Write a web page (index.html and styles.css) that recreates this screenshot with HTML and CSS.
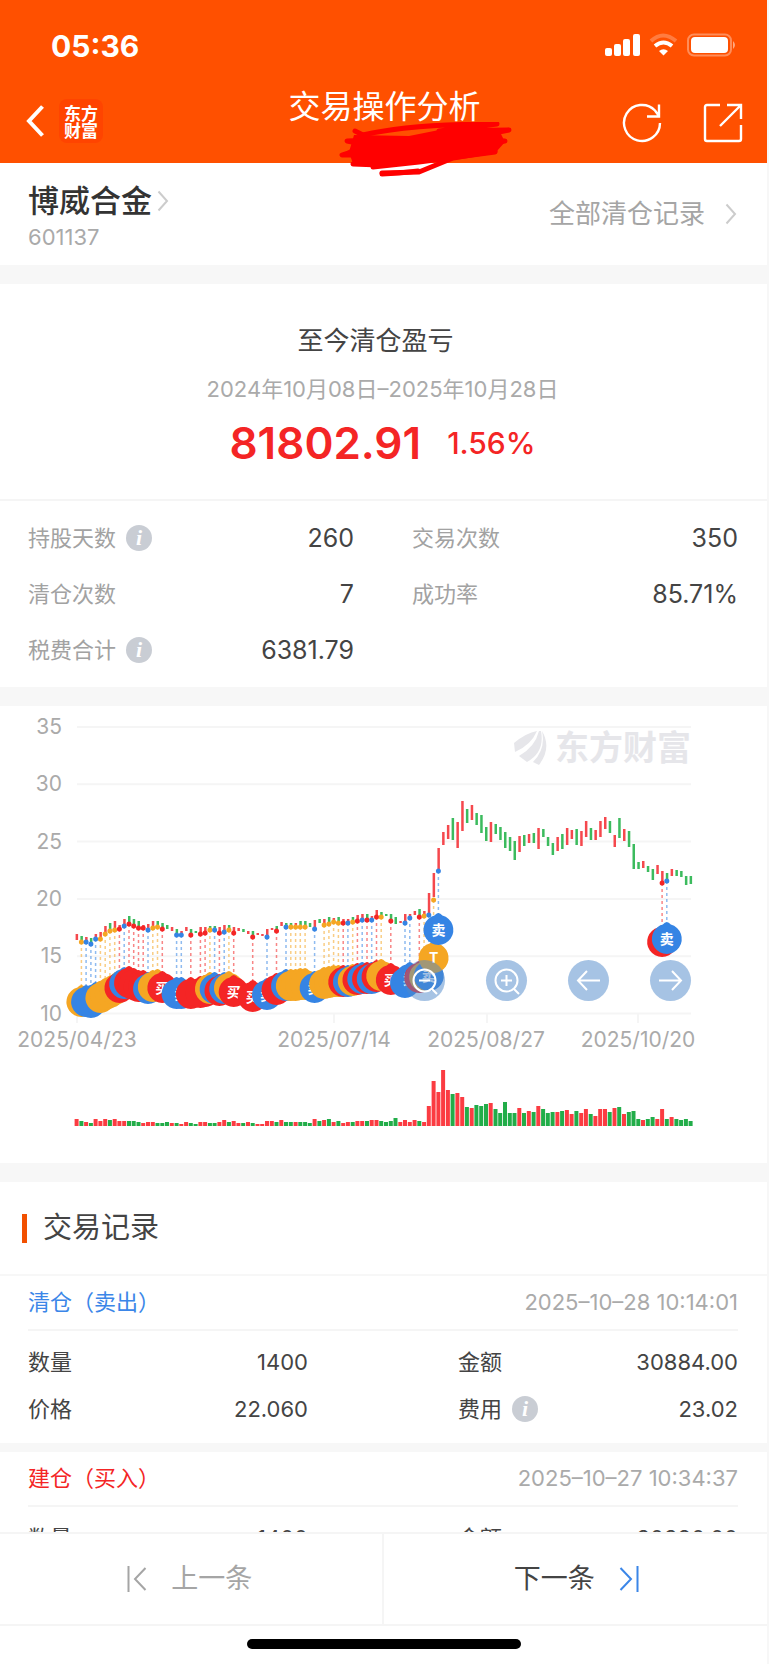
FILE: index.html
```html
<!DOCTYPE html>
<html lang="zh-CN">
<head>
    <meta charset="UTF-8">
    <meta name="viewport" content="width=device-width, initial-scale=1.0">
    <title>交易操作分析</title>
    <link rel="stylesheet" href="styles.css">
</head>
<body>
<div class="app">
    <!-- Header -->
    <header class="header">
        <div class="statusbar">
            <span class="time">05:36</span>
            <svg class="status-icons" width="134" height="26" viewBox="0 0 134 26" fill="#fff">
                <rect x="0" y="15" width="7" height="8" rx="2"/>
                <rect x="9" y="11" width="7" height="12" rx="2"/>
                <rect x="18" y="6" width="7" height="17" rx="2"/>
                <rect x="28" y="1" width="7" height="22" rx="2"/>
                <path d="M46 8Q58-3 71 8" fill="none" stroke="#fff" stroke-width="4" opacity=".25"/>
                <path d="M50 13Q58.500 6 67 13" fill="none" stroke="#fff" stroke-width="4"/>
                <path d="M54 18Q58.500 14.500 63 18L58.500 22.500Z"/>
                <rect x="83" y="1.500" width="43" height="21" rx="6" fill="none" stroke="#fff" stroke-width="2" opacity=".35"/>
                <rect x="86" y="4" width="37" height="16" rx="4"/>
                <path d="M128 8q4 4 0 8z" opacity=".5"/>
            </svg>
        </div>
        <div class="navbar">
            <div class="nav-side">
                <button class="icon-btn" aria-label="返回">
                    <svg width="18" height="32" viewBox="0 0 18 32" fill="none" stroke="#fff" stroke-width="4"><path d="M16.500 1.500L3 16l13.500 14.500"/></svg>
                </button>
                <span class="brand">东方<br>财富</span>
            </div>
            <h1>交易操作分析</h1>
            <div class="nav-side nav-right">
                <button class="icon-btn" aria-label="刷新">
                    <svg width="40" height="40" viewBox="0 0 40 40" fill="none" stroke="#fff" stroke-width="2.400"><path d="M38 20A18 18 0 1 1 33 7.500L37 13M37 1.500V13.500H25"/></svg>
                </button>
                <button class="icon-btn" aria-label="分享">
                    <svg width="40" height="40" viewBox="0 0 40 40" fill="none" stroke="#fff" stroke-width="2.400"><path d="M17 2H4Q2 2 2 4V36Q2 38 4 38H36Q38 38 38 36V22M24 2H38V16M38 2L17 23"/></svg>
                </button>
            </div>
        </div>
        <svg class="scribble" width="174" height="56" viewBox="0 0 174 56" fill="none" stroke="#f00" stroke-width="5" stroke-linecap="round" stroke-linejoin="round">
            <path d="M15 13L70 14L110 6L160 8L166 20L158 29L120 34L70 43L14 42L10 30Z" fill="#f00" stroke="none"/>
            <path d="M16 9L34 18L8 19L28 23L9 31L3 33H60L14 42L40 43L90 35"/>
            <path d="M24 13Q70 2 158 2L100 9L170 8L120 18L166 19L110 27L156 30L80 40L34 45"/>
            <path d="M43 51L80 50L114 36L156 29"/>
            <path d="M43 52L60 51L79 49"/>
        </svg>
    </header>

    <main class="content">
        <section class="stock">
            <div class="stock-name">
                <h2><a href="#">博威合金<svg width="12" height="22" viewBox="0 0 12 22"><path d="M1.500 1.500L10 11l-8.500 9.500"/></svg></a></h2>
                <p>601137</p>
            </div>
            <a class="all-records" href="#">全部清仓记录<svg width="12" height="22" viewBox="0 0 12 22"><path d="M1.500 1.500L10 11l-8.500 9.500"/></svg></a>
        </section>

        <!-- Profit summary -->
        <section class="summary">
            <h3>至今清仓盈亏</h3>
            <p class="period">2024年10月08日–2025年10月28日</p>
            <p class="profit"><strong>81802.91</strong><span>1.56%</span></p>
        </section>
        <dl class="stats">
            <div><dt>持股天数<button class="info" aria-label="说明">i</button></dt><dd>260</dd></div>
            <div><dt>交易次数</dt><dd>350</dd></div>
            <div><dt>清仓次数</dt><dd>7</dd></div>
            <div><dt>成功率</dt><dd>85.71%</dd></div>
            <div><dt>税费合计<button class="info" aria-label="说明">i</button></dt><dd>6381.79</dd></div>
        </dl>

        <!-- Price chart, drawn in chart.js -->
        <section class="chart">
            <svg id="chart" viewBox="0 0 767 457"></svg>
            <div class="chart-controls">
                <button aria-label="缩小"><svg viewBox="0 0 41 41"><circle cx="20.500" cy="20.500" r="11"/><path d="M15 20.500h11M28 29l5 5"/></svg></button>
                <button aria-label="放大"><svg viewBox="0 0 41 41"><circle cx="20.500" cy="20.500" r="11"/><path d="M15 20.500h11M20.500 15v11M28 29l5 5"/></svg></button>
                <button aria-label="左移"><svg viewBox="0 0 41 41"><path d="M32 20.500H10M19 11l-9 9.500 9 9.500"/></svg></button>
                <button aria-label="右移"><svg viewBox="0 0 41 41"><path d="M9 20.500h22M22 11l9 9.500-9 9.500"/></svg></button>
            </div>
        </section>

        <!-- Trade records -->
        <section class="records">
            <h3 class="records-title">交易记录</h3>
            <article class="record">
                <header><span class="sell">清仓（卖出）</span><time>2025–10–28 10:14:01</time></header>
                <dl>
                    <div><dt>数量</dt><dd>1400</dd></div>
                    <div><dt>金额</dt><dd>30884.00</dd></div>
                    <div><dt>价格</dt><dd>22.060</dd></div>
                    <div><dt>费用<button class="info" aria-label="说明">i</button></dt><dd>23.02</dd></div>
                </dl>
            </article>
            <article class="record">
                <header><span class="buy">建仓（买入）</span><time>2025–10–27 10:34:37</time></header>
                <dl>
                    <div><dt>数量</dt><dd>1400</dd></div>
                    <div><dt>金额</dt><dd>30380.00</dd></div>
                </dl>
            </article>
        </section>
    </main>

    <!-- Bottom bar -->
    <footer class="footer">
        <div class="pager">
            <button class="prev" disabled><svg width="20" height="28" viewBox="0 0 20 28"><path d="M1.500 1v26M18.500 3L8 14l10.500 11"/></svg>上一条</button>
            <button class="next">下一条<svg width="20" height="28" viewBox="0 0 20 28"><path d="M18.500 1v26M1.500 3L12 14 1.500 25"/></svg></button>
        </div>
        <div class="home-indicator"></div>
    </footer>
</div>
<script src="chart.js"></script>
</body>
</html>
```
FILE: styles.css
```css
* {
    box-sizing: border-box;
    margin: 0;
    padding: 0;
}

body {
    font-family: Inter, "Noto Sans CJK SC", sans-serif;
    font-size: 22px;
    line-height: 1.4;
    color: #444;
    background: #fff;
}

button {
    font: inherit;
    color: inherit;
    background: none;
    border: 0;
}

a {
    color: inherit;
    text-decoration: none;
}

.app {
    display: flex;
    flex-direction: column;
    height: 100vh;
    border-right: 2px solid #f7f7f7;
}

/* header */
.header {
    position: relative;
    flex: none;
    background: #ff5000;
    color: #fff;
    padding-bottom: 20px;
}

.statusbar {
    display: flex;
    justify-content: space-between;
    align-items: center;
    height: 92px;
    padding: 0 28px 0 51px;
}

.time {
    font-size: 30px;
    font-weight: 700;
}

.navbar {
    display: grid;
    grid-template-columns: 1fr auto 1fr;
    align-items: end;
    height: 51px;
    padding: 0 24px 0 26px;
}

.navbar h1 {
    align-self: start;
    font-size: 32px;
    font-weight: 400;
    line-height: 30px;
}

.nav-side {
    display: flex;
    align-items: center;
    gap: 15px;
}

.nav-right {
    justify-content: flex-end;
    gap: 41px;
}

.icon-btn {
    display: flex;
}

.brand {
    width: 44px;
    height: 44px;
    padding: 5px;
    border-radius: 8px;
    background: #ff4400;
    font-family: "Noto Sans CJK SC", sans-serif;
    font-size: 17px;
    font-weight: 700;
    line-height: 17px;
}

.scribble {
    position: absolute;
    left: 339px;
    top: 122px;
    z-index: 1;
}

/* scrolling part */
.content {
    flex: 1;
    min-height: 0;
    overflow: hidden;
    background: #f7f7f7;
}

.stock {
    display: flex;
    justify-content: space-between;
    align-items: center;
    height: 102px;
    padding: 0 30px 0 28px;
    background: #fff;
}

.stock-name {
    padding-top: 4px;
}

.stock h2 {
    font-size: 31px;
    font-weight: 500;
    line-height: 42px;
    color: #333;
}

.stock h2 svg {
    margin-left: 5px;
}

.stock p {
    line-height: 30px;
    color: #aaa;
}

.stock svg {
    fill: none;
    stroke: #ccc;
    stroke-width: 2;
}

.all-records {
    display: flex;
    align-items: center;
    gap: 20px;
    font-size: 26px;
    color: #a5a5a5;
}

.summary {
    height: 217px;
    margin-top: 19px;
    padding-top: 39px;
    background: #fff;
    border-bottom: 2px solid #f5f5f5;
    text-align: center;
}

.summary h3 {
    padding-right: 16px;
    font-size: 26px;
    font-weight: 400;
    line-height: 36px;
}

.period {
    margin-top: 14px;
    padding-right: 2px;
    line-height: 32px;
    color: #aaa;
}

.profit {
    display: flex;
    justify-content: center;
    align-items: center;
    gap: 26px;
    margin-top: 11px;
    padding-right: 2px;
    line-height: 54px;
    color: #f42525;
}

.profit strong {
    font-size: 44px;
    font-weight: 600;
}

.profit span {
    font-size: 30px;
    font-weight: 500;
}

.stats {
    display: grid;
    grid-template-columns: 1fr 1fr;
    column-gap: 58px;
    grid-auto-rows: 56px;
    padding: 9px 29px 9px 28px;
    background: #fff;
}

.stats div,
.record dl div {
    display: flex;
    justify-content: space-between;
    align-items: center;
}

.stats dt {
    color: #a2a2a2;
}

.stats dd {
    font-size: 25px;
}

dt {
    display: flex;
    align-items: center;
    gap: 10px;
}

.info {
    width: 26px;
    height: 26px;
    border-radius: 50%;
    background: #c9cdd4;
    color: #fff;
    font-family: "Liberation Serif", serif;
    font-size: 22px;
    font-style: italic;
    font-weight: 700;
    line-height: 26px;
}

/* chart */
.chart {
    position: relative;
    margin-top: 19px;
    background: #fff;
}

.chart > svg {
    display: block;
    width: 100%;
}

.grid-line {
    stroke: #f5f5f5;
    stroke-width: 2;
}

.axis-label {
    font-size: 21px;
    fill: #aaa;
}

.watermark {
    font-family: "Noto Sans CJK SC", sans-serif;
    font-size: 34px;
    font-weight: 700;
    fill: #e6e6ea;
}

.leaf {
    fill: #e6e6ea;
}

.pin-label {
    font-size: 14px;
    font-weight: 700;
    fill: #fff;
}

.chart-controls {
    position: absolute;
    right: 76px;
    top: 254px;
    display: flex;
    gap: 41px;
}

.chart-controls button {
    width: 41px;
    height: 41px;
    border-radius: 50%;
    background: rgba(77, 136, 202, .5);
}

.chart-controls svg {
    display: block;
    fill: none;
    stroke: #fff;
    stroke-width: 2;
}

/* records */
.records {
    margin-top: 19px;
}

.records-title {
    display: flex;
    align-items: center;
    gap: 16px;
    height: 92px;
    padding-left: 22px;
    background: #fff;
    font-size: 29px;
    font-weight: 400;
}

.records-title::before {
    content: "";
    width: 5px;
    height: 29px;
    background: #f25000;
}

.record {
    margin-top: 2px;
    padding: 0 29px 10px 28px;
    background: #fff;
}

.record + .record {
    margin-top: 9px;
}

.record header {
    display: flex;
    justify-content: space-between;
    align-items: center;
    height: 55px;
    border-bottom: 2px solid #f5f5f5;
}

.record time {
    color: #aaa;
}

.sell {
    color: #3b86e8;
}

.buy {
    color: #f42525;
}

.record dl {
    display: grid;
    grid-template-columns: 1fr 1fr;
    column-gap: 150px;
    grid-auto-rows: 47px;
    padding-top: 8px;
}

/* footer */
.footer {
    flex: none;
    background: #fff;
    border-top: 2px solid #f5f5f5;
}

.pager {
    display: grid;
    grid-template-columns: 1fr 1fr;
    height: 92px;
    border-bottom: 2px solid #f5f5f5;
}

.pager button {
    display: flex;
    justify-content: center;
    align-items: center;
    gap: 24px;
    font-size: 27px;
}

.pager svg {
    fill: none;
    stroke: currentColor;
    stroke-width: 2;
}

.pager .prev {
    color: #a5a5a5;
    padding-right: 2px;
    border-right: 2px solid #f5f5f5;
}

.pager .next {
    padding-left: 2px;
}

.pager .next svg {
    color: #3b86e8;
}

.home-indicator {
    width: 274px;
    height: 10px;
    margin: 13px auto 15px;
    border-radius: 5px;
    background: #000;
}
```
FILE: chart.js
```js
// one entry per day: colour, high, low (chart units), volume
const days = `
r228,234,7 g230,235,5 r231,236,4 g232,237,3 r228,233,7 r226,232,5 r220,228,7 g217,224,6 r215,223,7 r219,224,5
r213,219,5 g210,218,5 g213,219,5 g215,223,4 r219,223,3 r218,224,4 r215,223,4 g215,221,3 g217,223,3 g219,223,4
r221,225,3 g223,229,3 r225,229,2 r221,225,4 g223,229,3 g225,227,2 r221,228,4 r221,228,4 g220,224,3 g220,224,3
r221,227,4 r219,226,6 g219,224,4 r221,227,5 r222,225,3 g223,226,3 r225,228,4 g225,231,3 r227,229,2 r228,230,2
r223,230,5 r222,224,5 g220,225,4 r216,220,6 g217,221,4 g217,221,4 r217,221,4 g215,221,4 g215,221,4 g217,221,3
r214,223,7 g213,217,5 r213,218,6 g211,218,7 r212,217,4 g211,217,5 r213,217,3 r213,217,4 g211,216,4 r209,215,5
r208,213,5 g208,213,5 r210,213,6 r204,211,6 g206,211,5 g208,210,4 g208,215,5 g211,218,8 r215,217,4 r208,217,6
r208,212,4 r205,209,6 g203,210,5 r205,210,4 r187,207,20 r167,191,45 r142,163,34 r126,139,56 r119,133,36 g112,134,32
r116,142,33 r95,125,29 g103,117,19 r99,114,18 g107,119,21 g109,127,20 g121,135,22 r116,136,23 g118,128,17 g121,134,13
g126,142,24 g131,145,13 g135,154,13 r130,146,18 g129,140,13 r128,137,15 g127,137,14 r122,143,20 g123,131,17 g131,140,13
g137,149,14 r131,145,14 g128,143,15 r122,139,16 r124,133,12 g123,139,15 r125,140,13 r115,131,17 g122,134,12 r124,134,10
r115,131,17 r111,123,17 g115,127,14 r129,141,18 g112,132,19 r123,135,12 g125,141,14 g138,163,15 g156,163,7 r155,162,6
g160,166,7 g163,174,9 r159,168,7 r165,176,17 g167,174,7 r163,170,9 g164,170,7 g165,171,6 g170,179,7 g170,178,5
`.trim().split(/\s+/);

// day index, type (b buy, s sell, t both), dot y, pin y
const marks = [
    [1,'t',236,296],[2,'s',236,296],[3,'s',238,297],[4,'s',233,293],[5,'t',233,292],[6,'t',228,289],[7,'t',225,287],[8,'t',224,284],
    [9,'b',223,282],[10,'s',220,278],[11,'b',218,277],[12,'b',220,279],[13,'b',222,281],[14,'b',222,281],[15,'s',224,283],[16,'t',222,281],
    [17,'t',221,280],[18,'b',223,282],[21,'s',229,288],[22,'s',229,288],[24,'b',229,288],[26,'b',228,287],[27,'b',227,286],[28,'t',224,283],
    [29,'s',224,283],[30,'b',227,285],[31,'s',226,283],[32,'t',224,282],[33,'b',227,286],[37,'b',231,291],[40,'s',231,289],[42,'b',225,284],
    [44,'s',221,280],[45,'t',221,280],[46,'t',221,280],[47,'t',221,279],[48,'t',221,279],[50,'s',223,282],[52,'t',219,278],[53,'t',218,277],
    [54,'t',216,276],[55,'t',217,276],[56,'b',217,276],[57,'s',217,276],[58,'t',216,275],[59,'b',215,274],[60,'s',214,273],[61,'b',214,273],
    [62,'s',214,273],[63,'b',211,271],[64,'t',211,270],[66,'b',215,274],[69,'s',217,277],[70,'s',212,273],[72,'b',211,272],[73,'t',210,271],
    [74,'s',209,270],[75,'t',194,252],[76,'s',165,224],[123,'b',177,236],[124,'s',175,233]
];

const labelled = [18, 22, 33, 37, 40, 50, 66, 70, 74, 75, 76, 124];

const colors = { b: '#f42525', s: '#3584e4', t: '#f5a623' };
const names = { b: '买', s: '卖', t: 'T' };
const x = i => Math.round((76.6 + i * 4.76) * 10) / 10;

let out = '';

// grid and price labels
[35, 30, 25, 20, 15, 10].forEach((price, n) => {
    const y = 21 + n * 57.3;
    out += `<line class="grid-line" x1="77" x2="691" y1="${y}" y2="${y}"/>`;
    out += `<text class="axis-label" x="62" y="${y + 7}" text-anchor="end">${price}</text>`;
});

// dates
[[77, 77, '2025/04/23'], [334, 334, '2025/07/14'], [487, 486, '2025/08/27'], [638, 638, '2025/10/20']].forEach(d => {
    out += `<line class="grid-line" x1="${d[0]}" x2="${d[0]}" y1="307" y2="317"/>`;
    out += `<text class="axis-label" x="${d[1]}" y="341" text-anchor="middle">${d[2]}</text>`;
});

// watermark
out += `<path class="leaf" d="M514 37Q526 27 537 25Q531 39 515 46ZM519 50Q535 41 539 25H541Q545 46 527 56ZM533 56Q546 43 542 25Q552 42 539 59Z"/>`;
out += `<text class="watermark" x="555" y="54">东方财富</text>`;

// candles and volume
days.forEach((day, i) => {
    const [top, bottom, volume] = day.slice(1).split(',').map(Number);
    const up = day[0] === 'r';
    out += `<rect x="${x(i) - 1}" y="${top}" width="2.500" height="${bottom - top}" fill="${up ? '#f5484d' : '#3cbb5e'}"/>`;
    out += `<rect x="${x(i) - 2}" y="${420 - volume}" width="4" height="${volume}" fill="${up ? '#fb3c42' : '#22ad49'}"/>`;
});

// dashed lines first, so the pins cover them
marks.forEach(([i, type, dot, pin]) => {
    out += `<line x1="${x(i)}" x2="${x(i)}" y1="${dot}" y2="${pin - 16}" stroke="${colors[type]}" stroke-width="1.500" stroke-dasharray="3 3" opacity=".55"/>`;
    out += `<circle cx="${x(i)}" cy="${dot}" r="2.500" fill="${colors[type]}"/>`;
});
marks.forEach(([i, type, dot, pin]) => {
    out += `<path transform="translate(${x(i)} ${pin})" d="M0-17Q2-17 4-14.500A15 15 0 1 1-4-14.500Q-2-17 0-17Z" fill="${colors[type]}"/>`;
    if (labelled.includes(i)) {
        out += `<text class="pin-label" x="${x(i)}" y="${pin + 5}" text-anchor="middle">${names[type]}</text>`;
    }
});

document.getElementById('chart').innerHTML = out;
```
